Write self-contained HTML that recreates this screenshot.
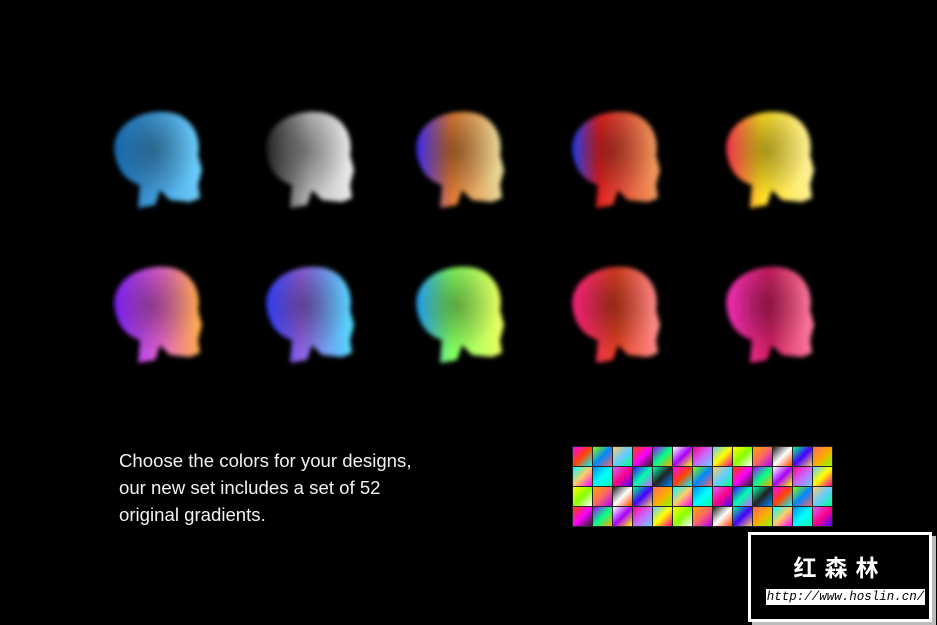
<!DOCTYPE html>
<html><head><meta charset="utf-8"><style>
body{margin:0;width:937px;height:625px;background:#000;overflow:hidden;position:relative;font-family:"Liberation Sans",sans-serif}
.t{position:absolute;left:119px;top:447px;color:#f2f2f2;font-size:18.6px;line-height:27px;letter-spacing:0}
.grid{position:absolute;left:572px;top:446px;display:grid;grid-template-columns:repeat(13,19px);grid-auto-rows:19px;gap:1px;background:#222;padding:1px}
.wm{position:absolute;left:748px;top:532px;width:178px;height:84px;background:#000;border:3px solid #fff;box-shadow:4px 4px 0 #bbb}
.wm .c{position:absolute;top:14px;left:0;width:100%;text-align:center;color:#fff;font:bold 23px "Noto Sans CJK SC",sans-serif;letter-spacing:8px}
.wm .u{position:absolute;left:15px;top:54px;width:159px;height:16px;background:#fff;color:#000;font:12.5px "Liberation Mono",monospace;line-height:16px;text-align:center;font-style:italic;overflow:hidden;white-space:nowrap}
</style></head><body>
<svg width="937" height="420" style="position:absolute;left:0;top:0">
<defs>
<filter id="b"><feGaussianBlur stdDeviation="2.5"/></filter>
<path id="s" d="M5,45 C0,15 30,0 55,2 C80,3 92,25 88,45 L92,60 L88,75 L90,88 L80,92 L60,90 L50,80 L45,95 L28,98 L30,75 C15,70 8,60 5,45 Z"/>
<radialGradient id="dk" cx=".45" cy=".4" r=".5"><stop offset="0" stop-color="#000" stop-opacity=".35"/><stop offset="1" stop-color="#000" stop-opacity="0"/></radialGradient>
<linearGradient id="g0" x1="0" x2="1"><stop offset="0" stop-color="#1a6fb8"/><stop offset="1" stop-color="#6fd0ff"/></linearGradient>
<linearGradient id="g1" x1="0" x2="1"><stop offset="0" stop-color="#222"/><stop offset=".5" stop-color="#bbb"/><stop offset="1" stop-color="#eee"/></linearGradient>
<linearGradient id="g2" x1="0" x2="1"><stop offset="0" stop-color="#3b2bff"/><stop offset=".4" stop-color="#e07a30"/><stop offset="1" stop-color="#e8e0a0"/></linearGradient>
<linearGradient id="g3" x1="0" x2="1"><stop offset="0" stop-color="#2040ff"/><stop offset=".3" stop-color="#e02020"/><stop offset="1" stop-color="#f0a060"/></linearGradient>
<linearGradient id="g4" x1="0" x2="1"><stop offset="0" stop-color="#ff3050"/><stop offset=".4" stop-color="#ffe020"/><stop offset="1" stop-color="#fff4a0"/></linearGradient>
<linearGradient id="g5" x1="0" x2="1"><stop offset="0" stop-color="#8020ff"/><stop offset=".5" stop-color="#e060d0"/><stop offset="1" stop-color="#ffb040"/></linearGradient>
<linearGradient id="g6" x1="0" x2="1"><stop offset="0" stop-color="#3040ff"/><stop offset=".4" stop-color="#9060e0"/><stop offset="1" stop-color="#50e0ff"/></linearGradient>
<linearGradient id="g7" x1="0" x2="1"><stop offset="0" stop-color="#20a0ff"/><stop offset=".4" stop-color="#80ff60"/><stop offset="1" stop-color="#f0ff60"/></linearGradient>
<linearGradient id="g8" x1="0" x2="1"><stop offset="0" stop-color="#ff2080"/><stop offset=".5" stop-color="#e04020"/><stop offset="1" stop-color="#ff9090"/></linearGradient>
<linearGradient id="g9" x1="0" x2="1"><stop offset="0" stop-color="#ff30c0"/><stop offset=".5" stop-color="#d02060"/><stop offset="1" stop-color="#ff80a0"/></linearGradient>
</defs>
<g filter="url(#b)">
<use href="#s" x="110" y="110" fill="url(#g0)"/>
<use href="#s" x="262" y="110" fill="url(#g1)"/>
<use href="#s" x="412" y="110" fill="url(#g2)"/>
<use href="#s" x="568" y="110" fill="url(#g3)"/>
<use href="#s" x="722" y="110" fill="url(#g4)"/>
<use href="#s" x="110" y="265" fill="url(#g5)"/>
<use href="#s" x="262" y="265" fill="url(#g6)"/>
<use href="#s" x="412" y="265" fill="url(#g7)"/>
<use href="#s" x="568" y="265" fill="url(#g8)"/>
<use href="#s" x="722" y="265" fill="url(#g9)"/>
<use href="#s" x="110" y="110" fill="url(#dk)"/>
<use href="#s" x="262" y="110" fill="url(#dk)"/>
<use href="#s" x="412" y="110" fill="url(#dk)"/>
<use href="#s" x="568" y="110" fill="url(#dk)"/>
<use href="#s" x="722" y="110" fill="url(#dk)"/>
<use href="#s" x="110" y="265" fill="url(#dk)"/>
<use href="#s" x="262" y="265" fill="url(#dk)"/>
<use href="#s" x="412" y="265" fill="url(#dk)"/>
<use href="#s" x="568" y="265" fill="url(#dk)"/>
<use href="#s" x="722" y="265" fill="url(#dk)"/>
</g>
</svg>
<div class="t">Choose the colors for your designs,<br>our new set includes a set of 52<br>original gradients.</div>
<div class="grid" id="g"></div>
<div class="wm"><div class="c">红森林</div><div class="u">http://www.hoslin.cn/</div></div>
<script>
var c=["#f0f","#0ff","#ff0","#f40","#40f","#0f8","#f08","#8f0","#08f","#fa0","#a0f","#0fa","#f66","#6cf","#fc6","#c6f","#222","#fff"];
var h="";for(var i=0;i<52;i++){var a=c[(i*7)%c.length],b=c[(i*5+3)%c.length],d=c[(i*11+1)%c.length];h+='<div style="background:linear-gradient(135deg,'+a+','+b+','+d+')"></div>';}
document.getElementById("g").innerHTML=h;
</script>
</body></html>
